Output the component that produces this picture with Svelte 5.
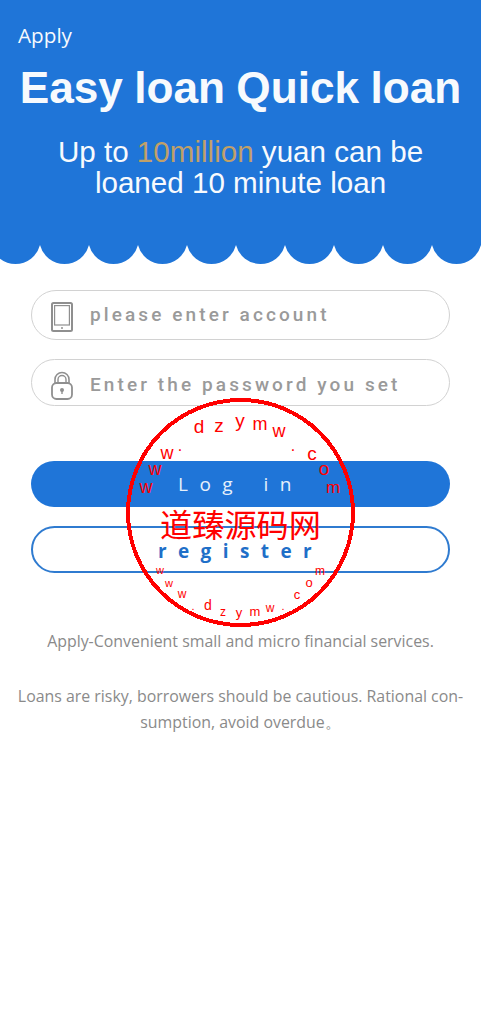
<script>
  const marks = [
    ['d',199,433,19],['z',219,432,19],['y',240,427,19],['m',260,430,18],['w',279,437,18],
    ['.',293,451,16],['c',312,460,19],['o',324,475,19],['m',333,493,17],
    ['w',146,493,18],['w',155,475,18],['w',167,459,18],['.',180,451,16],
    ['w',160,574,11],['w',169,587,11],['w',182,598,12],['.',193,610,11],['d',208,610,14],
    ['z',223,616,12],['y',239,617,13],['m',255,616,13],['w',270,612,12],['.',283,610,11],
    ['c',297,599,13],['o',309,587,13],['m',320,575,12]
  ];
  const cusps = Array.from({ length: 11 }, (_, i) => -9 + i * 49);
</script>

<main class="page">
  <header class="hero">
    <div class="apply">Apply</div>
    <h1>Easy loan Quick loan</h1>
    <p class="lead">Up to <span class="gold">10million</span> yuan can be<br />loaned 10 minute loan</p>
  </header>
  <svg class="waves" width="481" height="20" viewBox="0 0 481 20" aria-hidden="true">
    {#each cusps as x}
      <path d="M{x} 0A25.3 25.3 0 0 0 {x + 49} 0Z" fill="#1f75d8" />
    {/each}
  </svg>

  <form class="form" onsubmit={(e) => e.preventDefault()}>
    <div class="field first">
      <svg class="icon" width="22" height="30" viewBox="0 0 22 30" fill="none" stroke="#8f8f8f" aria-hidden="true">
        <rect x="1" y="1" width="20" height="28" rx="1.5" stroke-width="2" />
        <rect x="3.6" y="3.6" width="14.8" height="19.4" stroke-width="1.2" />
        <circle cx="11" cy="26" r="1" fill="#8f8f8f" stroke="none" />
      </svg>
      <span class="ph">please enter account</span>
    </div>
    <div class="field second">
      <svg class="icon" width="22" height="29" viewBox="0 0 22 29" fill="none" stroke="#8f8f8f" aria-hidden="true">
        <rect x="1" y="12" width="20" height="16" rx="4.5" stroke-width="1.8" />
        <path d="M4 12V8.5a7 7 0 0 1 14 0V12" stroke-width="1.6" />
        <path d="M7 12V8.5a4 4 0 0 1 8 0V12" stroke-width="1.4" />
        <circle cx="11" cy="19" r="2" fill="#8f8f8f" stroke="none" />
        <path d="M11 19v4" stroke-width="1.4" />
      </svg>
      <span class="ph">Enter the password you set</span>
    </div>
    <button type="button" class="login">Log in</button>
    <button type="button" class="register">register</button>
  </form>

  <footer class="foot">
    <p class="one">Apply-Convenient small and micro financial services.</p>
    <p class="two">Loans are risky, borrowers should be cautious. Rational con-<br />sumption, avoid overdue。</p>
  </footer>

  <svg class="stamp" width="481" height="1024" viewBox="0 0 481 1024" aria-hidden="true">
    <circle cx="240.5" cy="512.5" r="112.5" fill="none" stroke="#f00" stroke-width="4" shape-rendering="crispEdges" />
    <text class="cn" x="240.5" y="537" text-anchor="middle">道臻源码网</text>
    {#each marks as [c, x, y, s]}
      <text x={x} y={y} font-size={s} text-anchor="middle">{c}</text>
    {/each}
  </svg>
</main>

<style>
  :global(body) { margin: 0; background: #fff; }
  .page { position: relative; width: 481px; min-height: 1024px; overflow: hidden; font-family: "Liberation Sans", Arial, sans-serif; }
  .hero { background: #1f75d8; height: 245px; color: #f7fafd; box-sizing: border-box; padding-top: 22px; text-align: center; }
  .apply { font-family: "Open Sans", sans-serif; font-size: 20.7px; line-height: 26px; text-align: left; padding-left: 18px; }
  h1 { margin: 15px 0 0; font-size: 44.2px; line-height: 50px; font-weight: 700; white-space: nowrap; word-spacing: -1px; }
  .lead { margin: 23px 0 0; font-size: 29.6px; line-height: 31px; }
  .gold { color: #c0a069; }
  .waves { display: block; }
  .form { display: flex; flex-direction: column; padding: 25px 31px 0; }
  .field { display: flex; align-items: center; box-sizing: border-box; border: 1px solid #d2d2d2; border-radius: 25px; padding-left: 19px; gap: 17px; }
  .first { height: 50px; }
  .second { height: 47px; margin-top: 19px; }
  .first .icon { margin-top: 4px; }
  .second .icon { margin-top: 5px; }
  .first .ph { margin-bottom: 2px; }
  .second .ph { margin-top: 3px; }
  .icon { flex: none; }
  .ph { font-family: Roboto, sans-serif; font-weight: 500; font-size: 19px; letter-spacing: 3.1px; color: #9a9a9a; white-space: nowrap; }
  button { display: block; width: 100%; box-sizing: border-box; border-radius: 24px; font-family: "Open Sans", sans-serif; }
  .login { height: 46px; margin-top: 55px; border: 0; background: #1f75d8; color: #e6f0fb; font-size: 19px; letter-spacing: 11.5px; word-spacing: 3px; }
  .register { height: 47px; margin-top: 19px; border: 2.5px solid #2f7bd0; background: #fff; color: #1f6fc8; font-size: 19px; font-weight: 700; letter-spacing: 11.4px; padding: 2px 0 0; }
  .foot { margin-top: 57px; text-align: center; font-family: "Open Sans", sans-serif; font-size: 15.9px; color: #8a8a8a; }
  .foot p { margin: 0; }
  .one { line-height: 22px; }
  .two { margin-top: 31px !important; line-height: 26px; }
  .stamp { position: absolute; left: 0; top: 0; pointer-events: none; font-family: "Liberation Sans", sans-serif; fill: #f00; }
  .cn { font-family: "Noto Sans CJK SC", sans-serif; font-size: 32.2px; font-weight: 400; }
</style>
